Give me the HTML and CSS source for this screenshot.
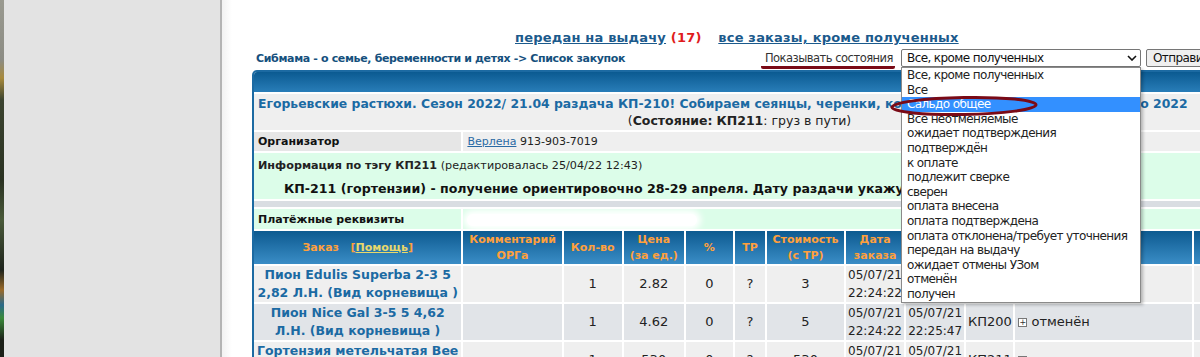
FILE: index.html
```html
<!DOCTYPE html>
<html lang="ru">
<head>
    <meta charset="UTF-8">
    <title>Список закупок</title>
    <link rel="stylesheet" href="styles.css">
</head>
<body>
    <div class="page">
        <div class="side"></div>
        <div class="main">
            <div class="content">
                <div class="top-links">
                    <a href="#">передан на выдачу</a> <span class="count">(17)</span>
                    <a href="#" class="all">все заказы, кроме полученных</a>
                </div>

                <div class="bar">
                    <div class="crumbs"><a href="#">Сибмама - о семье, беременности и детях</a> -&gt; <a href="#">Список закупок</a></div>
                    <div class="filter">
                        <span class="filter-label">Показывать состояния</span>
                        <div class="select">
                            <span class="select-value">Все, кроме полученных</span>
                            <svg class="chevron" width="10" height="6" viewBox="0 0 10 6"><polyline points="1,1 5,5 9,1" fill="none" stroke="#111" stroke-width="1.6"/></svg>
                            <ul class="options">
                                <li>Все, кроме полученных</li>
                                <li>Все</li>
                                <li class="active">Сальдо общее</li>
                                <li>Все неотменяемые</li>
                                <li>ожидает подтверждения</li>
                                <li>подтверждён</li>
                                <li>к оплате</li>
                                <li>подлежит сверке</li>
                                <li>сверен</li>
                                <li>оплата внесена</li>
                                <li>оплата подтверждена</li>
                                <li>оплата отклонена/требует уточнения</li>
                                <li>передан на выдачу</li>
                                <li>ожидает отмены УЗом</li>
                                <li>отменён</li>
                                <li>получен</li>
                            </ul>
                            <svg class="mark" width="150" height="22" viewBox="0 0 150 22">
                                <ellipse cx="75" cy="11" rx="72" ry="8.5" fill="none" stroke="#7a0a16" stroke-width="3" transform="rotate(-1 75 11)"/>
                            </svg>
                        </div>
                        <button type="button">Отправить</button>
                    </div>
                </div>

                <div class="box">
                    <div class="box-head"></div>
                    <table class="orders">
                        <colgroup>
                            <col style="width:207px"><col style="width:98px"><col style="width:58px"><col style="width:60px">
                            <col style="width:47px"><col style="width:30px"><col style="width:77px"><col style="width:58px">
                            <col style="width:58px"><col style="width:47px"><col style="width:176px"><col style="width:31px">
                        </colgroup>
                        <tr class="title-row">
                            <td colspan="12">
                                <div class="title">Егорьевские растюхи. Сезон 2022/ 21.04 раздача КП-210! Собираем сеянцы, черенки, корневища и клубни пионов на лето 2022</div>
                                <div class="state">(<b>Состояние:</b> <b>КП211</b>: груз в пути)</div>
                            </td>
                        </tr>
                        <tr class="org-row">
                            <td class="label">Организатор</td>
                            <td colspan="11"><a href="#">Верлена</a> 913-903-7019</td>
                        </tr>
                        <tr class="info-row">
                            <td colspan="12">
                                <div><b>Информация по тэгу КП211</b> (редактировалась 25/04/22 12:43)</div>
                                <div class="notice">КП-211 (гортензии) - получение ориентировочно 28-29 апреля. Дату раздачи укажу позже.</div>
                            </td>
                        </tr>
                        <tr class="sep-row"><td colspan="12"></td></tr>
                        <tr class="pay-row">
                            <td class="label">Платёжные реквизиты</td>
                            <td colspan="11"><span class="hidden-data"></span></td>
                        </tr>
                        <tr class="head-row">
                            <th>Заказ &nbsp; [<a href="#">Помощь</a>]</th>
                            <th>Комментарий<br>ОРГа</th>
                            <th>Кол-во</th>
                            <th>Цена<br>(за ед.)</th>
                            <th>%</th>
                            <th>ТР</th>
                            <th>Стоимость<br>(с ТР)</th>
                            <th>Дата<br>заказа</th>
                            <th></th>
                            <th></th>
                            <th></th>
                            <th></th>
                        </tr>
                        <tr class="item">
                            <td class="name">Пион Edulis Superba 2-3 5 2,82 Л.Н. (Вид корневища )</td>
                            <td></td>
                            <td>1</td>
                            <td>2.82</td>
                            <td>0</td>
                            <td>?</td>
                            <td>3</td>
                            <td class="date">05/07/21 22:24:22</td>
                            <td></td>
                            <td></td>
                            <td></td>
                            <td></td>
                        </tr>
                        <tr class="item alt">
                            <td class="name">Пион Nice Gal 3-5 5 4,62 Л.Н. (Вид корневища )</td>
                            <td></td>
                            <td>1</td>
                            <td>4.62</td>
                            <td>0</td>
                            <td>?</td>
                            <td>5</td>
                            <td class="date">05/07/21 22:24:22</td>
                            <td class="date">05/07/21 22:25:47</td>
                            <td>КП200</td>
                            <td class="status"><span class="plus">+</span> отменён</td>
                            <td></td>
                        </tr>
                        <tr class="item">
                            <td class="name">Гортензия метельчатая Bee Jolly 3 л</td>
                            <td></td>
                            <td>1</td>
                            <td>530</td>
                            <td>0</td>
                            <td>?</td>
                            <td>530</td>
                            <td class="date">05/07/21 22:26:10</td>
                            <td class="date">05/07/21 22:26:10</td>
                            <td>КП211</td>
                            <td class="status"><span class="plus">+</span> груз в пути</td>
                            <td></td>
                        </tr>
                    </table>
                </div>
            </div>
        </div>
    </div>
</body>
</html>
```

FILE: styles.css
```css
body {
    margin: 0;
    padding: 0;
    font-family: "DejaVu Sans", Verdana, sans-serif;
    color: #222;
    background: #fff;
    overflow: hidden;
}
a {
    color: inherit;
}
.page {
    display: flex;
    height: 357px;
}
.side {
    width: 220px;
    flex: none;
    border-right: 2px solid #b4b4b4;
    background:
        linear-gradient(#9a9a90 0, #8c8c84 60px, #a88a3c 78px, #3c4430 100px, #2a3222 180px, #4a5a3a 220px, #1e241c 270px, #9a6a2a 290px, #2a6a8a 305px, #3a8a3a 318px, #1c2018 340px) 0 0 / 4px 100% no-repeat,
        #e3e3e3;
}
.main {
    flex: none;
    padding-left: 30px;
    background: linear-gradient(to right, #f2f2f2, #fff 10px);
}
.content {
    width: 975px;
}
.top-links {
    margin-top: 29px;
    height: 18px;
    padding-left: 263px;
    font-size: 13px;
    font-weight: bold;
    letter-spacing: 0.2px;
    line-height: 18px;
    color: #1b5a8c;
    white-space: nowrap;
}
.top-links .count {
    color: #e01c1c;
    margin-right: 12px;
}
.bar {
    margin-top: 2px;
    height: 18px;
    display: flex;
    justify-content: space-between;
    align-items: center;
}
.crumbs {
    padding-left: 4px;
    font-size: 11px;
    font-weight: bold;
    letter-spacing: -0.35px;
    color: #15507d;
    white-space: nowrap;
}
.crumbs a {
    text-decoration: none;
}
.filter {
    display: flex;
    align-items: center;
    font-size: 11.5px;
}
.filter-label {
    color: #333;
    letter-spacing: -0.5px;
    border-bottom: 3px solid #7a0a16;
    border-radius: 0 0 2px 2px;
    line-height: 14px;
    padding: 0 2px 1px 4px;
    margin: 4px 6px 0 0;
}
.select {
    position: relative;
    box-sizing: border-box;
    width: 240px;
    height: 18px;
    border: 1px solid #767676;
    border-radius: 2px;
    background: #fff;
    display: flex;
    align-items: center;
    justify-content: space-between;
    padding-left: 5px;
    font-size: 12px;
    letter-spacing: -0.6px;
    color: #111;
}
.chevron {
    margin-right: 3px;
}
.options {
    position: absolute;
    top: 17px;
    left: -1px;
    box-sizing: border-box;
    width: 240px;
    margin: 0;
    padding: 0;
    list-style: none;
    background: #fff;
    border: 1px solid #8a8a8a;
    box-shadow: 2px 2px 3px rgba(0, 0, 0, 0.25);
    z-index: 2;
}
.options li {
    height: 14.6px;
    line-height: 14.6px;
    padding-left: 5px;
    color: #222;
    white-space: nowrap;
}
.options li.active {
    background: #3390ff;
    color: #fff;
}
.mark {
    position: absolute;
    left: -13px;
    top: 45px;
    z-index: 3;
}
button {
    box-sizing: border-box;
    height: 18px;
    width: 81px;
    margin-left: 5px;
    padding: 0 6px;
    font-family: inherit;
    font-size: 12px;
    letter-spacing: -0.6px;
    text-align: left;
    color: #111;
    background: #efefef;
    border: 1px solid #767676;
    border-radius: 2px;
}
.box {
    margin-top: 3px;
    border: 2px solid #1c6aa2;
    border-bottom: none;
    border-radius: 5px 5px 0 0;
    overflow: hidden;
}
.box-head {
    height: 21px;
    background: linear-gradient(#0b5a91, #2a7fba);
}
.orders {
    table-layout: fixed;
    border-collapse: separate;
    border-spacing: 2px;
    margin: -1px -2px 0;
    width: 975px;
    background: #fff;
}
.orders td,
.orders th {
    padding: 0;
    overflow: hidden;
}
.title-row td {
    height: 36px;
    background: #efefef;
    text-align: center;
    line-height: 17px;
    white-space: nowrap;
}
.title {
    text-align: left;
    padding-left: 4px;
    font-size: 12.4px;
    color: #1b6aa3;
    font-weight: bold;
}
.state {
    font-size: 12.5px;
}
.org-row td {
    height: 19px;
    background: #efefef;
    font-size: 11px;
    padding-left: 4px;
}
.org-row td.label,
.pay-row td.label {
    font-weight: bold;
    color: #111;
}
.org-row td.label {
    background: #e6e6e6;
}
.org-row a {
    color: #2a6aa5;
}
.info-row td {
    height: 46px;
    background: #dcfde9;
    font-size: 11.2px;
    padding-left: 4px;
    vertical-align: top;
    white-space: nowrap;
}
.info-row td > div:first-child {
    margin-top: 6px;
}
.notice {
    margin-top: 9px;
    padding-left: 26px;
    font-size: 12.6px;
    font-weight: bold;
    color: #111;
}
.sep-row td {
    height: 6px;
    background: #d9dde2;
}
.pay-row td {
    height: 20px;
    background: #dcfde9;
    font-size: 11px;
    padding-left: 4px;
    white-space: nowrap;
}
.hidden-data {
    display: inline-block;
    width: 230px;
    height: 12px;
    background: #fff;
    border-radius: 6px;
    box-shadow: 0 0 6px 4px #fff;
    vertical-align: middle;
}
.head-row th {
    height: 33px;
    background: linear-gradient(#0d5a90, #3a8dc6);
    color: #ffa03c;
    font-size: 11px;
    font-weight: bold;
    line-height: 16px;
}
.head-row th a {
    color: #e9d86a;
}
.item td {
    height: 35px;
    background: #efefef;
    text-align: center;
    font-size: 13px;
    line-height: 18px;
    color: #222;
}
.item.alt td {
    height: 36px;
    background: #e1e4e8;
}
.item td.name {
    color: #1b6aa3;
    font-weight: bold;
    font-size: 12.5px;
}
.item td.date {
    font-size: 12px;
    text-align: left;
    padding-left: 2px;
}
.item td.status {
    text-align: left;
    padding-left: 3px;
}
.plus {
    display: inline-block;
    width: 7px;
    height: 7px;
    border: 1px solid #777;
    font-size: 8px;
    line-height: 7px;
    text-align: center;
    vertical-align: 1px;
    color: #333;
    background: #fff;
}
```
